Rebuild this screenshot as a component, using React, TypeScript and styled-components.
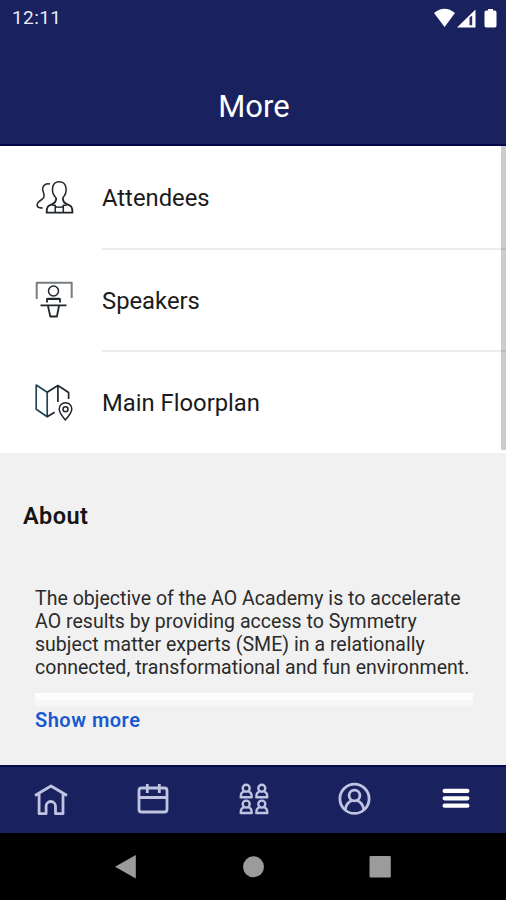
import React from "react";
import styled, { createGlobalStyle } from "styled-components";

const GlobalStyle = createGlobalStyle`
  * { box-sizing: border-box; }
  body { margin: 0; font-family: Roboto, "Liberation Sans", sans-serif; }
`;

const Screen = styled.div`
  width: 506px;
  height: 900px;
  display: flex;
  flex-direction: column;
  overflow: hidden;
  background: #f1f1f1;
`;

const Header = styled.header`
  height: 146px;
  flex: none;
  background: #19215f;
  border-bottom: 2px solid #05054a;
  color: #fff;
`;

const StatusBar = styled.div`
  height: 36px;
  padding: 0 9px 0 12px;
  display: flex;
  align-items: center;
  justify-content: space-between;
`;

const Clock = styled.span`
  font-size: 19px;
  line-height: 36px;
  letter-spacing: 0.4px;
  color: #e9eaf4;
`;

const StatusIcons = styled.svg`
  width: 66px;
  height: 24px;
  display: block;
`;

const Title = styled.h1`
  margin: 51px 0 0;
  padding-left: 2px;
  text-align: center;
  font-size: 31px;
  line-height: 40px;
  font-weight: 400;
`;

const Menu = styled.nav`
  position: relative;
  height: 307px;
  flex: none;
  display: grid;
  grid-template-rows: 104px 102px 101px;
  background: #fff;
`;

const ScrollThumb = styled.div`
  position: absolute;
  top: 0;
  right: 0;
  width: 5px;
  height: 304px;
  background: rgba(0, 0, 0, 0.2);
`;

const MenuItem = styled.a`
  display: grid;
  grid-template-columns: 102px 1fr;
`;

const MenuIcon = styled.svg`
  width: 44px;
  height: 44px;
  margin: 28px 0 0 32px;
  fill: none;
  stroke: #20262b;
  stroke-width: 1.5;
  stroke-linejoin: round;
`;

const MenuLabel = styled.span<{ $last?: boolean }>`
  display: flex;
  align-items: center;
  padding-top: 1px;
  border-bottom: ${(p) => (p.$last ? "0" : "2px solid #ececec")};
  font-size: 23.8px;
  line-height: 32px;
  color: #1b1b1b;
`;

const About = styled.section`
  flex: 1;
  padding: 48px 33px 0 23px;
  display: flex;
  flex-direction: column;
`;

const Heading = styled.h2`
  margin: 0;
  font-size: 23.5px;
  line-height: 30px;
  font-weight: 600;
  letter-spacing: 0.4px;
  color: #151515;
`;

const Description = styled.p`
  margin: 56px 0 0 12px;
  font-size: 19.5px;
  line-height: 23px;
  letter-spacing: 0.03px;
  color: #2b2b2b;
`;

const Line = styled.span`
  display: block;
  white-space: nowrap;
`;

const Fade = styled.div`
  height: 13px;
  margin: 14px 0 0 12px;
  background: linear-gradient(#fdfdfd 0 7px, #f7f7f7 7px);
`;

const ShowMore = styled.a`
  margin: 0 0 0 12px;
  font-size: 20px;
  line-height: 28px;
  font-weight: 600;
  letter-spacing: 0.5px;
  color: #1859d1;
`;

const TabBar = styled.nav`
  height: 68px;
  flex: none;
  display: grid;
  grid-template-columns: repeat(5, 1fr);
  place-items: center;
  background: #19215f;
  box-shadow: inset 0 2px #08084c;
`;

const TabIcon = styled.svg<{ $active?: boolean }>`
  width: 40px;
  height: 40px;
  fill: none;
  stroke: ${(p) => (p.$active ? "#fff" : "#c0c4e0")};
  stroke-width: 2.8;
  stroke-linejoin: round;
`;

const SystemBar = styled.div`
  height: 67px;
  flex: none;
  display: flex;
  justify-content: space-between;
  align-items: center;
  padding: 0 114px;
  background: #000;
`;

const SystemIcon = styled.svg`
  width: 24px;
  height: 26px;
  fill: #9b9b9b;
`;

const Attendees = () => (
  <MenuIcon viewBox="32 174 44 44">
    <path strokeWidth="1.800" d="M56.200 198c.3 4-1.600 5.200-4.600 6.300-3.600 1.200-5 2.700-5 8.400h25.900c0-5.700-1.400-7.200-5-8.400-3-1.100-5-2.300-4.600-6.300" />
    <path d="M56.200 198c-2.700-2.500-4.200-6-3.600-10.200.5-3.900 3-6.100 6.600-6.100s6.200 2.200 6.800 6.100c.6 4.200-.9 7.700-3.400 10.200" />
    <path d="M51.800 205.300h3.400v7M66.800 205.300h-3.500v7M55.400 206.300q3.800 2.100 7.700 0" />
    <path d="M50 184c-4.400-.8-7.300 1.400-7.400 5-.1 3 2.700 5.200 1.200 8.400-1.200 2.600-4.400 2.900-6 5.400-1.500 2.500-1.200 5.300 4.900 5.300" />
  </MenuIcon>
);

const Speakers = () => (
  <MenuIcon viewBox="32 278 44 44">
    <path stroke="#777c80" strokeWidth="2" d="M36.700 299v-16.300h35V298" />
    <circle cx="53.500" cy="291" r="5" />
    <path d="M47 302.500V299h13v3.500M47.500 298.600h12M40.500 305.400h26M48 306l2.300 10.500h6.600L59 306" strokeWidth="1.800" />
  </MenuIcon>
);

const Floorplan = () => (
  <MenuIcon viewBox="32 380 44 44">
    <path stroke="#234553" d="M36.200 385l11 7.200v24.500l-11-7.400z" strokeWidth="1.700" />
    <path d="M47.200 392.200l10.700-6.700 10.700 7v6.500M57.900 385.500V402M47.200 416.700l7.400-4.500" strokeWidth="1.700" />
    <path d="M65.300 420c-3.600-4.300-6.100-7.400-6.100-11a6.300 6.300 0 0 1 12.600 0c0 3.600-2.600 6.700-6.500 11z" />
    <circle cx="65.500" cy="409.200" r="2.500" />
  </MenuIcon>
);

const people = [
  [246.2, 788.3],
  [261.8, 788.3],
  [246.2, 804.1],
  [261.8, 804.1],
];

export default function App() {
  return (
    <>
      <GlobalStyle />
      <Screen>
        <Header>
          <StatusBar>
            <Clock>12:11</Clock>
            <StatusIcons viewBox="431 5 66 24" fill="#fff">
              <path d="M434 12q10.500-8.500 21 0L444.600 26z" />
              <path d="M457 26.500L475.500 8.500v18z" />
              <path d="M469.500 16.500l2.700-2v9.700h-2.700z" fill="#282f68" />
              <path d="M488 8h5v1.500h1.700q1.800 0 1.800 1.800v13.400q0 1.800-1.800 1.800h-8.400q-1.800 0-1.800-1.800V11.300q0-1.800 1.800-1.800H488z" />
            </StatusIcons>
          </StatusBar>
          <Title>More</Title>
        </Header>
        <Menu>
          <MenuItem><Attendees /><MenuLabel>Attendees</MenuLabel></MenuItem>
          <MenuItem><Speakers /><MenuLabel>Speakers</MenuLabel></MenuItem>
          <MenuItem><Floorplan /><MenuLabel $last>Main Floorplan</MenuLabel></MenuItem>
          <ScrollThumb />
        </Menu>
        <About>
          <Heading>About</Heading>
          <Description>
            <Line>The objective of the AO Academy is to accelerate</Line>
            <Line>AO results by providing access to Symmetry</Line>
            <Line>subject matter experts (SME) in a relationally</Line>
            <Line>connected, transformational and fun environment.</Line>
          </Description>
          <Fade />
          <ShowMore>Show more</ShowMore>
        </About>
        <TabBar>
          <TabIcon viewBox="30.500 779 40 40">
            <path d="M34.500 795.500L50.500 786l16 9.500M38.600 793.500v20.200h7v-7.500a4.700 4.700 0 0 1 9.400 0v7.500h7.500v-20.200" />
          </TabIcon>
          <TabIcon viewBox="132 779 40 40">
            <rect x="139" y="788" width="28" height="24" rx="2.500" />
            <path d="M139 797.500h28M147.300 784v9M159.300 784v9" />
          </TabIcon>
          <TabIcon viewBox="233 779 40 40">
            {people.map(([x, y]) => (
              <g key={`${x}-${y}`} transform={`translate(${x} ${y})`} strokeWidth="2.400">
                <circle r="3.500" />
                <path d="M-2.600 3L-4.600 4.800Q-5.400 5.600-5.500 8.900H5.500Q5.400 5.600 4.600 4.800L2.600 3" />
              </g>
            ))}
          </TabIcon>
          <TabIcon viewBox="334.500 779 40 40">
            <circle cx="355" cy="798.800" r="14.600" />
            <circle cx="355" cy="795.500" r="5.400" />
            <path d="M345.800 809.500c.8-5 3-7.800 6.800-9M364.200 809.500c-.8-5-3-7.800-6.800-9" />
          </TabIcon>
          <TabIcon $active viewBox="435.200 779 40 40">
            <path d="M444.800 790.900h22.800M444.800 798.300h22.800M444.800 805.700h22.800" strokeWidth="4.200" strokeLinecap="round" />
          </TabIcon>
        </TabBar>
        <SystemBar>
          <SystemIcon viewBox="114 854 24 26"><path d="M115 866.800L135.800 855v23.500z" /></SystemIcon>
          <SystemIcon viewBox="241 854 24 26"><circle cx="253.500" cy="866.800" r="10.500" /></SystemIcon>
          <SystemIcon viewBox="368 854 24 26"><rect x="369.500" y="856" width="21.300" height="21.600" rx="1" /></SystemIcon>
        </SystemBar>
      </Screen>
    </>
  );
}
